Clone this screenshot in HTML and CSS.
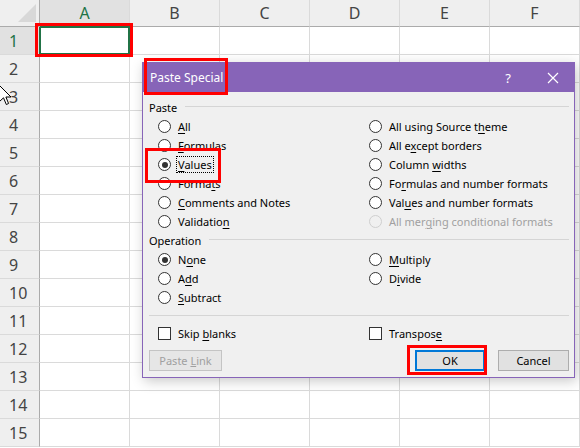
FILE: index.html
```html
<!DOCTYPE html>
<html lang="en">

<head>
    <meta charset="UTF-8">
    <title>Paste Special</title>
    <link rel="stylesheet" href="styles.css">
</head>

<body>
    <div class="sheet">
        <div class="corner"><span class="corner-mark"></span></div>
        <div class="col-head active">A</div>
        <div class="col-head">B</div>
        <div class="col-head">C</div>
        <div class="col-head">D</div>
        <div class="col-head">E</div>
        <div class="col-head">F</div>

        <div class="row-head active">1</div>
        <div class="cell selected"></div><div class="cell"></div><div class="cell"></div><div class="cell"></div><div class="cell"></div><div class="cell"></div>
        <div class="row-head">2</div>
        <div class="cell"></div><div class="cell"></div><div class="cell"></div><div class="cell"></div><div class="cell"></div><div class="cell"></div>
        <div class="row-head">3</div>
        <div class="cell"></div><div class="cell"></div><div class="cell"></div><div class="cell"></div><div class="cell"></div><div class="cell"></div>
        <div class="row-head">4</div>
        <div class="cell"></div><div class="cell"></div><div class="cell"></div><div class="cell"></div><div class="cell"></div><div class="cell"></div>
        <div class="row-head">5</div>
        <div class="cell"></div><div class="cell"></div><div class="cell"></div><div class="cell"></div><div class="cell"></div><div class="cell"></div>
        <div class="row-head">6</div>
        <div class="cell"></div><div class="cell"></div><div class="cell"></div><div class="cell"></div><div class="cell"></div><div class="cell"></div>
        <div class="row-head">7</div>
        <div class="cell"></div><div class="cell"></div><div class="cell"></div><div class="cell"></div><div class="cell"></div><div class="cell"></div>
        <div class="row-head">8</div>
        <div class="cell"></div><div class="cell"></div><div class="cell"></div><div class="cell"></div><div class="cell"></div><div class="cell"></div>
        <div class="row-head">9</div>
        <div class="cell"></div><div class="cell"></div><div class="cell"></div><div class="cell"></div><div class="cell"></div><div class="cell"></div>
        <div class="row-head">10</div>
        <div class="cell"></div><div class="cell"></div><div class="cell"></div><div class="cell"></div><div class="cell"></div><div class="cell"></div>
        <div class="row-head">11</div>
        <div class="cell"></div><div class="cell"></div><div class="cell"></div><div class="cell"></div><div class="cell"></div><div class="cell"></div>
        <div class="row-head">12</div>
        <div class="cell"></div><div class="cell"></div><div class="cell"></div><div class="cell"></div><div class="cell"></div><div class="cell"></div>
        <div class="row-head">13</div>
        <div class="cell"></div><div class="cell"></div><div class="cell"></div><div class="cell"></div><div class="cell"></div><div class="cell"></div>
        <div class="row-head">14</div>
        <div class="cell"></div><div class="cell"></div><div class="cell"></div><div class="cell"></div><div class="cell"></div><div class="cell"></div>
        <div class="row-head">15</div>
        <div class="cell"></div><div class="cell"></div><div class="cell"></div><div class="cell"></div><div class="cell"></div><div class="cell"></div>
    </div>

    <!-- mouse pointer -->
    <svg class="cursor" width="14" height="22" viewBox="0 0 14 22">
        <path d="M0.5 0.5 L0.5 16.5 L4.5 12.8 L7.3 19.5 L9.6 18.5 L6.9 12 L12 12 Z" fill="#fff" stroke="#000" stroke-width="1" stroke-linejoin="miter" />
    </svg>

    <div class="dialog">
        <div class="title-bar">
            <span class="title">Paste Special</span>
            <span class="help">?</span>
            <svg class="close" width="12" height="12" viewBox="0 0 12 12">
                <path d="M1 1 L11 11 M11 1 L1 11" stroke="#fff" stroke-width="1.2" />
            </svg>
        </div>

        <div class="dialog-body">
            <div class="group-label"><span>Paste</span></div>
            <div class="options">
                <label class="option"><span class="radio"></span><span><u>A</u>ll</span></label>
                <label class="option"><span class="radio"></span><span>All using Source t<u>h</u>eme</span></label>
                <label class="option"><span class="radio"></span><span><u>F</u>ormulas</span></label>
                <label class="option"><span class="radio"></span><span>All e<u>x</u>cept borders</span></label>
                <label class="option"><span class="radio checked"></span><span class="focus"><u>V</u>alues</span></label>
                <label class="option"><span class="radio"></span><span>Column <u>w</u>idths</span></label>
                <label class="option"><span class="radio"></span><span>Forma<u>t</u>s</span></label>
                <label class="option"><span class="radio"></span><span>Fo<u>r</u>mulas and number formats</span></label>
                <label class="option"><span class="radio"></span><span><u>C</u>omments and Notes</span></label>
                <label class="option"><span class="radio"></span><span>Val<u>u</u>es and number formats</span></label>
                <label class="option"><span class="radio"></span><span>Validatio<u>n</u></span></label>
                <label class="option disabled"><span class="radio"></span><span>All mer<u>g</u>ing conditional formats</span></label>
            </div>

            <div class="group-label"><span>Operation</span></div>
            <div class="options">
                <label class="option"><span class="radio checked"></span><span>N<u>o</u>ne</span></label>
                <label class="option"><span class="radio"></span><span><u>M</u>ultiply</span></label>
                <label class="option"><span class="radio"></span><span>A<u>d</u>d</span></label>
                <label class="option"><span class="radio"></span><span>D<u>i</u>vide</span></label>
                <label class="option"><span class="radio"></span><span><u>S</u>ubtract</span></label>
            </div>

            <div class="separator"></div>

            <div class="options checks">
                <label class="option"><span class="checkbox"></span><span>Skip <u>b</u>lanks</span></label>
                <label class="option"><span class="checkbox"></span><span>Transpos<u>e</u></span></label>
            </div>

            <div class="buttons">
                <button class="btn disabled">Paste <u>L</u>ink</button>
                <button class="btn default">OK</button>
                <button class="btn">Cancel</button>
            </div>
        </div>
    </div>

    <!-- red annotation boxes -->
    <div class="mark mark-cell"></div>
    <div class="mark mark-title"></div>
    <div class="mark mark-values"></div>
    <div class="mark mark-ok"></div>
</body>

</html>
```

FILE: styles.css
```css
html {
    box-sizing: border-box;
}

*,
*::before,
*::after {
    box-sizing: inherit;
    margin: 0;
    padding: 0;
}

:root {
    --grid-line: #dadada;
    --head-bg: #efefef;
    --head-line: #ababab;
    --excel-green: #217346;
    --dialog-purple: #8764b8;
    --dialog-bg: #f0f0f0;
    --mark-red: #ff0000;
}

body {
    background-color: #fff;
    font-family: 'Noto Sans', 'Open Sans', sans-serif;
    overflow: hidden;
    position: relative;
    width: 580px;
    height: 448px;
}

/* ---------- spreadsheet ---------- */

.sheet {
    display: grid;
    grid-template-columns: 40px repeat(6, 90px);
    grid-template-rows: 28px repeat(15, 28px);
    margin-top: -1px;
}

.corner,
.col-head,
.row-head {
    background-color: var(--head-bg);
    color: #444;
    font-size: 16px;
    display: flex;
    align-items: center;
    justify-content: center;
}

.corner {
    border-right: 1px solid var(--head-line);
    border-bottom: 1px solid var(--head-line);
    position: relative;
}

.corner-mark {
    position: absolute;
    right: 3px;
    bottom: 4px;
    width: 0;
    height: 0;
    border-left: 18px solid transparent;
    border-bottom: 18px solid #d8d8d8;
}

.col-head {
    border-right: 1px solid var(--grid-line);
    border-bottom: 1px solid var(--head-line);
    padding-top: 1px;
}

.row-head {
    border-right: 1px solid var(--head-line);
    border-bottom: 1px solid var(--grid-line);
    justify-content: flex-start;
    padding-left: 9px;
}

.col-head.active,
.row-head.active {
    background-color: #e1e1e1;
    color: var(--excel-green);
}

.cell {
    border-right: 1px solid var(--grid-line);
    border-bottom: 1px solid var(--grid-line);
}

.cell.selected {
    border: 2px solid var(--excel-green);
    margin: -1px 0 0 -1px;
}

.cursor {
    position: absolute;
    left: -1px;
    top: 85px;
}

/* ---------- dialog ---------- */

.dialog {
    position: absolute;
    left: 142px;
    top: 62px;
    width: 433px;
    background-color: var(--dialog-bg);
    border: 1px solid var(--dialog-purple);
    box-shadow: 2px 3px 12px rgba(0, 0, 0, 0.22);
    font-size: 11px;
    color: #000;
}

.title-bar {
    height: 29px;
    background-color: var(--dialog-purple);
    color: #fff;
    display: flex;
    align-items: center;
    padding-left: 7px;
}

.title {
    font-size: 12px;
    flex: 1;
}

.help {
    font-size: 13px;
    margin-right: 36px;
}

.close {
    margin-right: 15px;
}

.dialog-body {
    padding: 6px 5px 6px 6px;
}

.group-label {
    height: 19px;
    display: flex;
    align-items: center;
}

.group-label::after {
    content: '';
    flex: 1;
    height: 1px;
    background-color: #d5d5d5;
    margin-left: 8px;
    margin-top: -2px;
}

.options {
    display: grid;
    grid-template-columns: 211px 1fr;
    grid-auto-rows: 19px;
    padding-left: 9px;
}

.option {
    display: flex;
    align-items: center;
    gap: 7px;
    white-space: nowrap;
}

.option u {
    text-decoration-thickness: 1px;
    text-underline-offset: 2px;
}

.radio {
    width: 13px;
    height: 13px;
    border: 1px solid #333;
    border-radius: 50%;
    background-color: #fff;
    display: flex;
    align-items: center;
    justify-content: center;
    flex-shrink: 0;
}

.radio.checked::after {
    content: '';
    width: 6px;
    height: 6px;
    border-radius: 50%;
    background-color: #333;
}

.option.disabled {
    color: #a0a0a0;
}

.option.disabled .radio {
    border-color: #cfcfcf;
    background-color: transparent;
}

.focus {
    outline: 1px dotted #000;
    outline-offset: 0;
    padding: 0 1px;
    margin-left: -1px;
    line-height: 15px;
}

.separator {
    height: 1px;
    background-color: #d5d5d5;
    margin: 8px 0 8px 0;
}

.checkbox {
    width: 13px;
    height: 13px;
    border: 1px solid #333;
    background-color: #fff;
    flex-shrink: 0;
}

.buttons {
    display: flex;
    margin-top: 7px;
    gap: 13px;
}

.btn {
    font-family: inherit;
    font-size: 11px;
    height: 21px;
    background-color: #e1e1e1;
    border: 1px solid #adadad;
    color: #000;
    width: 71px;
}

.btn.disabled {
    width: 73px;
    color: #a0a0a0;
    background-color: #e6e6e6;
    border-color: #c4c4c4;
    margin-right: auto;
}

.btn.default {
    width: 70px;
    border: 2px solid #0078d7;
}

/* ---------- annotations ---------- */

.mark {
    position: absolute;
    border: 3px solid var(--mark-red);
}

.mark-cell {
    left: 35px;
    top: 23px;
    width: 98px;
    height: 34px;
}

.mark-title {
    left: 144px;
    top: 58px;
    width: 84px;
    height: 37px;
}

.mark-values {
    left: 145px;
    top: 148px;
    width: 76px;
    height: 35px;
}

.mark-ok {
    left: 407px;
    top: 345px;
    width: 80px;
    height: 30px;
}
```
